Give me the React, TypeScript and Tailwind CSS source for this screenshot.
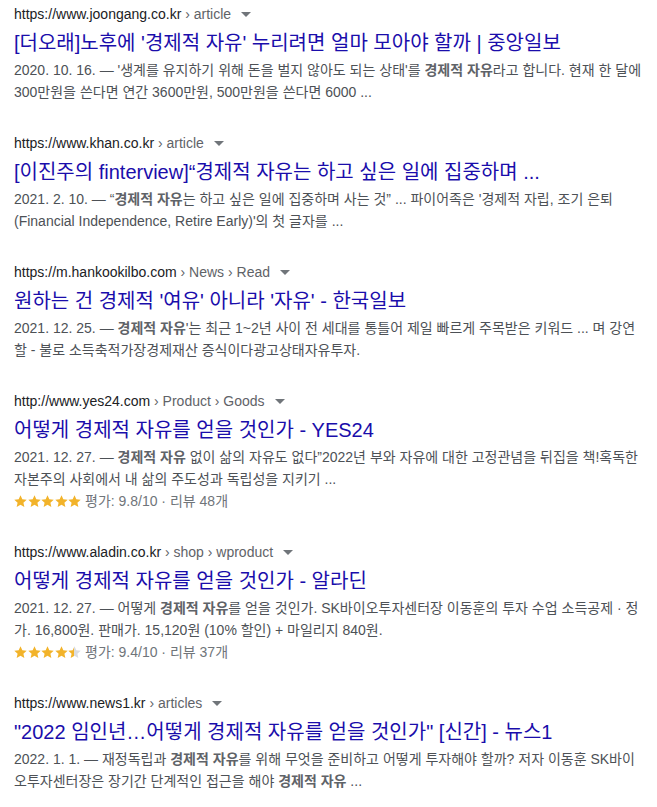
import React from 'react';

type Part = string | { b: string };

interface Result {
  site: string;
  crumbs: string;
  title: string;
  lines: Part[][];
  rating?: { stars: number; text: string };
}

const results: Result[] = [
  {
    site: 'https://www.joongang.co.kr',
    crumbs: ' › article',
    title: "[더오래]노후에 '경제적 자유' 누리려면 얼마 모아야 할까 | 중앙일보",
    lines: [
      ["2020. 10. 16. — '생계를 유지하기 위해 돈을 벌지 않아도 되는 상태'를 ", { b: '경제적 자유' }, '라고 합니다. 현재 한 달에'],
      ['300만원을 쓴다면 연간 3600만원, 500만원을 쓴다면 6000 ...'],
    ],
  },
  {
    site: 'https://www.khan.co.kr',
    crumbs: ' › article',
    title: '[이진주의 finterview]“경제적 자유는 하고 싶은 일에 집중하며 ...',
    lines: [
      ['2021. 2. 10. — “', { b: '경제적 자유' }, "는 하고 싶은 일에 집중하며 사는 것” ... 파이어족은 '경제적 자립, 조기 은퇴"],
      ["(Financial Independence, Retire Early)'의 첫 글자를 ..."],
    ],
  },
  {
    site: 'https://m.hankookilbo.com',
    crumbs: ' › News › Read',
    title: "원하는 건 경제적 '여유' 아니라 '자유' - 한국일보",
    lines: [
      ['2021. 12. 25. — ', { b: '경제적 자유' }, "'는 최근 1~2년 사이 전 세대를 통틀어 제일 빠르게 주목받은 키워드 ... 며 강연"],
      ['할 - 불로 소득축적가장경제재산 증식이다광고상태자유투자.'],
    ],
  },
  {
    site: 'http://www.yes24.com',
    crumbs: ' › Product › Goods',
    title: '어떻게 경제적 자유를 얻을 것인가 - YES24',
    lines: [
      ['2021. 12. 27. — ', { b: '경제적 자유' }, ' 없이 삶의 자유도 없다”2022년 부와 자유에 대한 고정관념을 뒤집을 책!혹독한'],
      ['자본주의 사회에서 내 삶의 주도성과 독립성을 지키기 ...'],
    ],
    rating: { stars: 5, text: '평가: 9.8/10 · 리뷰 48개' },
  },
  {
    site: 'https://www.aladin.co.kr',
    crumbs: ' › shop › wproduct',
    title: '어떻게 경제적 자유를 얻을 것인가 - 알라딘',
    lines: [
      ['2021. 12. 27. — 어떻게 ', { b: '경제적 자유' }, '를 얻을 것인가. SK바이오투자센터장 이동훈의 투자 수업 소득공제 · 정'],
      ['가. 16,800원. 판매가. 15,120원 (10% 할인) + 마일리지 840원.'],
    ],
    rating: { stars: 4.5, text: '평가: 9.4/10 · 리뷰 37개' },
  },
  {
    site: 'https://www.news1.kr',
    crumbs: ' › articles',
    title: '"2022 임인년…어떻게 경제적 자유를 얻을 것인가" [신간] - 뉴스1',
    lines: [
      ['2022. 1. 1. — 재정독립과 ', { b: '경제적 자유' }, '를 위해 무엇을 준비하고 어떻게 투자해야 할까? 저자 이동훈 SK바이'],
      ['오투자센터장은 장기간 단계적인 접근을 해야 ', { b: '경제적 자유' }, ' ...'],
    ],
  },
];

const STAR = 'M12 2l2.94 6.47 7.06.75-5.28 4.78 1.49 6.95L12 17.35 5.79 20.95l1.49-6.95L2 9.22l7.06-.75z';

const Star: React.FC<{ fill: number; id: string }> = ({ fill, id }) => (
  <svg width="13" height="13" viewBox="1.5 1.5 21 21" className="block">
    <defs>
      <linearGradient id={id}>
        <stop offset={`${fill * 100}%`} stopColor="#f2b32a" />
        <stop offset={`${fill * 100}%`} stopColor="#dadce0" />
      </linearGradient>
    </defs>
    <path d={STAR} fill={`url(#${id})`} />
  </svg>
);

const Stars: React.FC<{ value: number; k: number }> = ({ value, k }) => (
  <div className="flex items-center gap-[0.5px]">
    {[0, 1, 2, 3, 4].map((i) => (
      <Star key={i} id={`s${k}-${i}`} fill={Math.max(0, Math.min(1, value - i))} />
    ))}
  </div>
);

const ResultItem: React.FC<{ r: Result; k: number }> = ({ r, k }) => (
  <div className="mb-[30px]">
    <div className="h-[20px] text-[14px] leading-[20px] whitespace-pre">
      <span className="text-[#202124]">{r.site}</span>
      <span className="text-[#5f6368]">{r.crumbs}</span>
      <span className="inline-block align-middle ml-[10px] mb-[2px] w-0 h-0 border-l-[5px] border-r-[5px] border-t-[5px] border-l-transparent border-r-transparent border-t-[#70757a]" />
    </div>
    <h3 className="mt-[6px] mb-[3px] text-[20px] leading-[26px] text-[#1a0dab] whitespace-nowrap">{r.title}</h3>
    <div className="text-[14px] leading-[22px] text-[#4d5156] whitespace-nowrap">
      {r.lines.map((line, i) => (
        <div key={i}>
          {line.map((p, j) =>
            typeof p === 'string' ? <span key={j}>{p}</span> : <b key={j} className="font-bold text-[#5f6368]">{p.b}</b>,
          )}
        </div>
      ))}
      {r.rating && (
        <div className="flex items-center gap-[4px] text-[#70757a]">
          <Stars value={r.rating.stars} k={k} />
          <span>{r.rating.text}</span>
        </div>
      )}
    </div>
  </div>
);

export default function App() {
  return (
    <div
      className="bg-white min-h-[807px] w-[657px] pt-[4px] px-[14px] overflow-hidden"
      style={{ fontFamily: '"Liberation Sans", Arial, "Noto Sans CJK KR", sans-serif' }}
    >
      {results.map((r, i) => (
        <ResultItem key={i} r={r} k={i} />
      ))}
    </div>
  );
}
